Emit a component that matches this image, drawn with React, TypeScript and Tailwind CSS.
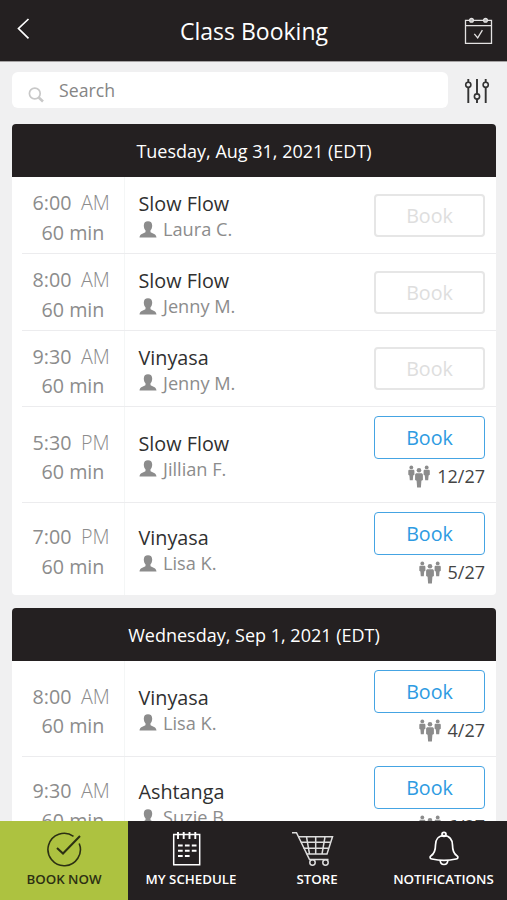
type ClassItem = {
  time: string;
  period: string;
  title: string;
  teacher: string;
  spots?: string;
  height: string;
};

const days: { date: string; classes: ClassItem[] }[] = [
  {
    date: "Tuesday, Aug 31, 2021 (EDT)",
    classes: [
      { time: "6:00", period: "AM", title: "Slow Flow", teacher: "Laura C.", height: "h-[77px]" },
      { time: "8:00", period: "AM", title: "Slow Flow", teacher: "Jenny M.", height: "h-[77px]" },
      { time: "9:30", period: "AM", title: "Vinyasa", teacher: "Jenny M.", height: "h-[76px]" },
      { time: "5:30", period: "PM", title: "Slow Flow", teacher: "Jillian F.", spots: "12/27", height: "h-[96px]" },
      { time: "7:00", period: "PM", title: "Vinyasa", teacher: "Lisa K.", spots: "5/27", height: "h-[92px]" },
    ],
  },
  {
    date: "Wednesday, Sep 1, 2021 (EDT)",
    classes: [
      { time: "8:00", period: "AM", title: "Vinyasa", teacher: "Lisa K.", spots: "4/27", height: "h-[96px]" },
      { time: "9:30", period: "AM", title: "Ashtanga", teacher: "Suzie B.", spots: "6/27", height: "h-[92px]" },
    ],
  },
];

function PersonIcon() {
  return (
    <svg width="18" height="17" viewBox="0 0 18 17" fill="#8c8c8c" className="shrink-0">
      <path d="M9 .3c2.700 0 4.200 1.500 4.200 4.200 0 2.300-.8 3.900-1.700 4.800v1.700c.5 1.200 5.800 1.500 6 5.500H.5c.2-4 5.500-4.300 6-5.500V9.300C5.600 8.400 4.800 6.800 4.800 4.500 4.800 1.800 6.300.3 9 .3z" />
    </svg>
  );
}

function GroupIcon() {
  return (
    <svg width="22" height="23" viewBox="0 0 22 23" fill="#8c8c8c">
      <circle cx="3.300" cy="2.400" r="1.900" />
      <path d="M1.600 4.800h3.400c.9 0 1.400.5 1.400 1.300v3.700l-1.200.6-.4 4.800h-3l-.4-4.800-1.100-.6V6.100c0-.8.5-1.300 1.300-1.300z" />
      <circle cx="18.700" cy="2.400" r="1.900" />
      <path d="M17 4.800h3.400c.9 0 1.400.5 1.400 1.300v3.700l-1.200.6-.4 4.800h-3l-.4-4.800-1.200-.6V6.100c0-.8.500-1.300 1.400-1.300z" />
      <circle cx="11" cy="5.200" r="2.300" />
      <path d="M9 8.200h4c1.200 0 1.900.7 1.900 1.700v5.200l-1.500.6-.5 6.700H9.100l-.5-6.700-1.500-.6V9.900c0-1 .7-1.700 1.900-1.700z" />
    </svg>
  );
}

function Header() {
  return (
    <header className="flex h-[62px] shrink-0 items-start justify-between border-b border-[#a5a3a3] bg-[#242021] pl-[17px] pr-[14px] text-white">
      <svg width="28" height="22" viewBox="0 0 28 22" fill="none" stroke="#fff" strokeWidth="1.700" className="mt-[18px]">
        <path d="M11.500 1 1.500 10.500l10 9.800" />
      </svg>
      <h1 className="mt-[13px] pr-px text-[23px] leading-9">Class Booking</h1>
      <svg width="29" height="28" viewBox="0 0 29 28" fill="none" stroke="#e4e2e2" strokeWidth="1.300" className="mt-[17px]">
        <path d="M5.800 3.300H1.500v23h26v-23h-4.300M9.200 3.300h10.600M1.500 8.600h26" />
        <path d="m10.300 16.800 3.400 4 4.700-7.700" />
        <circle cx="7.500" cy="3.300" r="1.900" fill="#bbb" />
        <circle cx="21.500" cy="3.300" r="1.900" fill="#bbb" />
      </svg>
    </header>
  );
}

function SearchBar() {
  return (
    <div className="flex items-center pr-[17px]">
      <div className="flex h-9 w-[436px] items-center rounded-md bg-white pl-4">
        <svg width="17" height="17" viewBox="0 0 17 17" fill="none" stroke="#c8c8c8" className="mt-[10px]">
          <circle cx="6.800" cy="6.500" r="5.400" strokeWidth="1.700" />
          <path d="m10.700 10.500 4.300 4" strokeWidth="2.600" />
        </svg>
        <span className="ml-[14px] text-[17.700px] leading-6 text-[#858585]">Search</span>
      </div>
      <svg width="26" height="26" viewBox="0 0 26 26" fill="none" stroke="#333" strokeWidth="1.900" className="ml-auto mt-px">
        <path d="M4.300 1v3.300M4.300 9.300V25M13 1v15M13 21v4M21.700 1v3.300M21.700 9.300V25" />
        <circle cx="4.300" cy="6.800" r="2.600" strokeWidth="1.600" />
        <circle cx="13" cy="18.500" r="2.600" strokeWidth="1.600" />
        <circle cx="21.700" cy="6.800" r="2.600" strokeWidth="1.600" />
      </svg>
    </div>
  );
}

function ClassRow({ item, last }: { item: ClassItem; last: boolean }) {
  return (
    <div className={`ml-[10px] flex ${item.height} ${last ? "" : "border-b border-[#ececee]"}`}>
      <div className="flex w-[103px] shrink-0 flex-col justify-center border-r border-[#f4f6f6] pt-[5px] text-[19.700px] leading-[29.500px] text-[#8c8c8c]">
        <div className="flex">
          <span className="ml-[10.500px] w-[48.500px]">{item.time}</span>
          <span className="font-light">{item.period}</span>
        </div>
        <span className="ml-[19.500px]">60 min</span>
      </div>
      <div className="flex flex-col justify-center pl-[13.500px] pt-0.5">
        <h3 className="text-[19.800px] leading-[26px] text-[#303030]">{item.title}</h3>
        <p className="flex h-6 items-center gap-[6.500px] text-[18.200px] leading-6 text-[#8c8c8c]">
          <PersonIcon />
          {item.teacher}
        </p>
      </div>
      {item.spots ? (
        <div className="ml-auto mr-[11px] flex flex-col items-end pt-[9px]">
          <button className="h-[43px] w-[111px] rounded border-[1.500px] border-[#45a4e3] text-[19.700px] text-[#2e9be2]">Book</button>
          <div className="mt-1 flex items-center gap-[7px] text-[18px] leading-[26px] text-[#444]">
            <GroupIcon />
            {item.spots}
          </div>
        </div>
      ) : (
        <div className="ml-auto mr-[11px] flex items-center">
          <button className="h-[43px] w-[111px] rounded border-2 border-[#e6e6e6] pt-px text-[19.700px] text-[#dedede]">Book</button>
        </div>
      )}
    </div>
  );
}

function BookIcon() {
  return (
    <svg width="36" height="36" viewBox="0 0 36 36" fill="none" stroke="#2c3013">
      <path d="M27.500 5.300A16.200 16.200 0 1 0 33.200 12.500" strokeWidth="1.600" />
      <path d="m11 17 6 5.500L34 5" strokeWidth="2" />
    </svg>
  );
}

function ScheduleIcon() {
  return (
    <svg width="36" height="36" viewBox="0 0 36 36" fill="none" stroke="#fff" className="mr-2">
      <path d="M4.700 3.500h26v30.300h-26z" strokeWidth="1.500" />
      <path d="M9 1v7M14.700 1v7M20.500 1v7M26.300 1v7" strokeWidth="1.900" />
      <path d="M9 14.500h18.500M9 19.800h18.500M9 25h12" strokeWidth="2" strokeDasharray="4.700 2.200" />
    </svg>
  );
}

function CartIcon() {
  return (
    <svg width="44" height="36" viewBox="0 0 44 36" fill="none" stroke="#ddd" strokeWidth="1.500" className="mr-2">
      <path d="M1 1.700h4.500L18.500 28.500h19" />
      <path d="M7.500 5.800h34L36 23H15.500M9.800 11.300h29.900M12.500 17.200h25.400M15.500 5.800l3 17.200M24.700 5.800V23M34 5.800 31 23" />
      <circle cx="21.500" cy="31.500" r="2.700" />
      <circle cx="34.500" cy="31.500" r="2.700" />
    </svg>
  );
}

function BellIcon() {
  return (
    <svg width="36" height="36" viewBox="0 0 36 36" fill="none" stroke="#fff" strokeWidth="1.700">
      <path d="M18 4.700c-5.500 0-8.500 4-8.500 9.300 0 7-1.700 9-4.400 10.700-1.700 1.200-1.200 3 .8 3.300 7 1.500 17.200 1.500 24.200 0 2-.3 2.500-2.100.8-3.300-2.700-1.700-4.400-3.700-4.400-10.700 0-5.300-3-9.300-8.500-9.300z" />
      <circle cx="18" cy="3.300" r="2" />
      <path d="M14.200 29.300c0 2.500 1.600 4.200 3.800 4.200s3.800-1.700 3.800-4.200" />
    </svg>
  );
}

const tabs = [
  { label: "BOOK NOW", icon: <BookIcon />, style: "bg-[#adc240] text-[#2c3013]" },
  { label: "MY SCHEDULE", icon: <ScheduleIcon />, style: "text-white" },
  { label: "STORE", icon: <CartIcon />, style: "text-white" },
  { label: "NOTIFICATIONS", icon: <BellIcon />, style: "text-white" },
];

export default function App() {
  return (
    <div className="flex h-screen flex-col overflow-hidden bg-[#f0f0f1] font-['Open_Sans',sans-serif]">
      <Header />
      <main className="flex min-h-0 flex-1 flex-col overflow-hidden pl-3 pt-[10px]">
        <SearchBar />
        {days.map((day, i) => (
          <section key={day.date} className={`mr-[11px] shrink-0 overflow-hidden rounded bg-white ${i === 0 ? "mt-4" : "mt-[13px]"}`}>
            <h2 className="flex h-[53px] items-center justify-center bg-[#242021] pt-px text-[18px] text-white">{day.date}</h2>
            {day.classes.map((item, n) => (
              <ClassRow key={n} item={item} last={n === day.classes.length - 1} />
            ))}
          </section>
        ))}
      </main>
      <nav className="grid h-[79px] shrink-0 grid-cols-[128px_126px_126px_127px] bg-[#242021]">
        {tabs.map((tab) => (
          <a key={tab.label} className={`flex flex-col items-center pt-[10px] text-[13.300px] font-semibold ${tab.style}`}>
            {tab.icon}
            <span className="mt-[2px] leading-5">{tab.label}</span>
          </a>
        ))}
      </nav>
    </div>
  );
}
